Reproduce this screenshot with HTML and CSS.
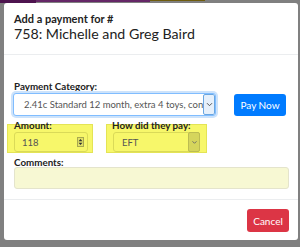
FILE: index.html
```html
<!DOCTYPE html>
<html>
<head>
<meta charset="utf-8">
<link rel="stylesheet" href="styles.css">
</head>
<body>
<div class="behind">
  <span class="seg seg-a"></span>
  <span class="seg seg-b"></span>
  <span class="seg seg-c"></span>
</div>
<div class="modal">
  <div class="modal-header">
    <div class="sub">Add a payment for #</div>
    <div class="title">758: Michelle and Greg Baird</div>
  </div>
  <div class="modal-body">
    <div class="label label-cat">Payment Category:</div>
    <div class="row-cat">
      <div class="select focus">
        <span class="sel-text">2.41c Standard 12 month, extra 4 toys, concession</span>
        <span class="arrow-box blue"><svg width="7" height="5" viewBox="0 0 7 5"><path d="M1 1.2 L3.5 3.7 L6 1.2" fill="none" stroke="#555" stroke-width="1"/></svg></span>
      </div>
      <div class="btn btn-primary">Pay Now</div>
    </div>
    <div class="row-two">
      <div class="hl hl-amount">
        <div class="label">Amount:</div>
        <div class="input">
          <span class="val">118</span>
          <span class="spin"><svg width="7" height="10" viewBox="0 0 7 10"><rect x="0.5" y="0.5" width="6" height="9" fill="#e2e266" stroke="#a8a850" stroke-width="1"/><path d="M3.5 2 L5.5 4.3 L1.5 4.3 Z M3.5 8 L5.5 5.7 L1.5 5.7 Z" fill="#333"/></svg></span>
        </div>
      </div>
      <div class="hl hl-pay">
        <div class="label">How did they pay:</div>
        <div class="input sel">
          <span class="val">EFT</span>
          <span class="arrow-box dark"><svg width="7" height="5" viewBox="0 0 7 5"><path d="M1.5 1.3 L3.5 3.3 L5.5 1.3" fill="none" stroke="#666" stroke-width="0.9"/></svg></span>
        </div>
      </div>
    </div>
    <div class="label label-comments">Comments:</div>
    <div class="comments"></div>
  </div>
  <div class="modal-footer">
    <div class="btn btn-danger">Cancel</div>
  </div>
</div>
</body>
</html>
```
FILE: styles.css
```css
html, body {
  margin: 0;
  padding: 0;
}
body {
  width: 300px;
  height: 247px;
  background: #808080;
  font-family: Lato, "Open Sans", sans-serif;
  color: #212529;
  overflow: hidden;
}
.behind {
  display: flex;
  height: 3px;
}
.seg { display: block; height: 3px; }
.seg-a { width: 36px; background: #4e144f; }
.seg-b { width: 114px; height: 2px; background: #652767; }
.seg-c { width: 55px; height: 1px; background: #6f5c0c; }

.modal {
  margin-left: 4px;
  width: 294px;
  height: 237px;
  background: #fff;
  border-radius: 3px;
  display: flex;
  flex-direction: column;
}
.modal-header {
  height: 52px;
  flex: none;
  padding: 9px 10px 0 10px;
  border-bottom: 1px solid #ebedef;
  box-sizing: border-box;
}
.sub {
  font-size: 11px;
  font-weight: 700;
  line-height: 13px;
  color: #222;
}
.title {
  font-size: 14.2px;
  line-height: 17px;
  color: #222;
}
.modal-body {
  flex: none;
  height: 145px;
  padding: 25px 9px 0 10px;
  box-sizing: border-box;
  border-bottom: 1px solid #ebedef;
}
.label {
  font-size: 9.8px;
  font-weight: 700;
  line-height: 12px;
  color: #222;
}
.label-cat { margin-bottom: 1px; }
.row-cat {
  display: flex;
  align-items: center;
}
.select {
  margin-left: -1px;
  width: 203px;
  height: 23px;
  box-sizing: border-box;
  border: 1px solid #80bdff;
  box-shadow: 0 0 0 2px #cde3fb;
  border-radius: 3px;
  display: flex;
  align-items: center;
  overflow: hidden;
  background: #fff;
}
.sel-text {
  flex: 1;
  white-space: nowrap;
  overflow: hidden;
  font-size: 9.5px;
  color: #555;
  padding-left: 10px;
}
.arrow-box {
  flex: none;
  width: 12px;
  box-sizing: border-box;
  display: flex;
  align-items: center;
  justify-content: center;
}
.arrow-box.blue {
  border: 1px solid #6aa6e0;
  background: #e6f0fb;
  border-radius: 2px;
  height: 21px;
}
.btn {
  font-size: 10px;
  color: #fff;
  border-radius: 3px;
  display: flex;
  align-items: center;
  justify-content: center;
}
.btn-primary {
  background: #007bff;
  width: 52px;
  height: 22px;
  margin-left: 18px;
  margin-top: 1px;
}
.row-two {
  display: flex;
  margin-top: 8px;
  margin-left: -7px;
}
.hl {
  background: #f7f76a;
  border: 1px solid #e4e455;
  box-sizing: border-box;
  height: 29px;
}
.hl .label { margin-top: -6px; }
.hl-amount { width: 86px; padding-left: 6px; }
.hl-pay { width: 101px; margin-left: 13px; padding-left: 5px; }
.input {
  height: 20px;
  margin-top: 1px;
  box-sizing: border-box;
  border: 1px solid #dada58;
  border-radius: 3px;
  background: #f7f76a;
  display: flex;
  align-items: center;
  font-size: 9.5px;
  color: #555;
}
.hl-amount .input { width: 74px; }
.hl-pay .input { width: 87px; margin-left: 1px; }
.val { flex: 1; padding-left: 7px; }
.hl-pay .val { padding-left: 8px; }
.spin { display: flex; margin-right: 3px; }
.arrow-box.dark {
  background: #d5d55c;
  border: 1px solid #bcbc52;
  border-radius: 2px;
  height: 20px;
  margin-right: -1px;
}
.label-comments { margin-top: 3px; }
.comments {
  margin-top: -1px;
  width: 275px;
  height: 22px;
  box-sizing: border-box;
  background: #f7f8d3;
  border: 1px solid #e4e4cc;
  border-radius: 3px;
}
.modal-footer {
  flex: 1;
  display: flex;
  justify-content: flex-end;
  align-items: flex-start;
  padding: 9px 9px 0 0;
}
.btn-danger {
  background: #dc3545;
  width: 42px;
  height: 23px;
}
```
